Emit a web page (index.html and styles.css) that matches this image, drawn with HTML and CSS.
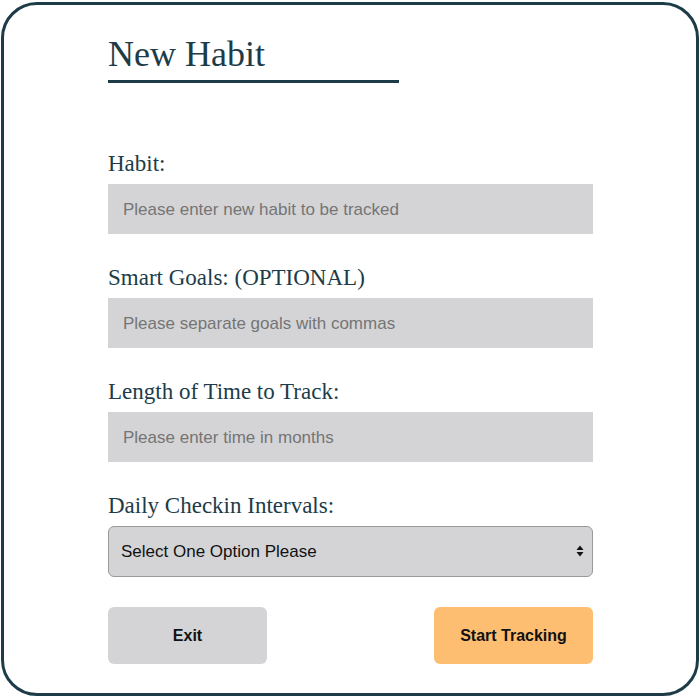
FILE: index.html
```html
<!DOCTYPE html>
<html lang="en">
<head>
<meta charset="utf-8">
<title>New Habit</title>
<link rel="stylesheet" href="styles.css">
</head>
<body>
<div class="card">
  <form class="form">
    <h1 class="title">New Habit</h1>
    <div class="fields">
      <div class="field">
        <label class="label" for="habit">Habit:</label>
        <input class="input" id="habit" type="text" placeholder="Please enter new habit to be tracked">
      </div>
      <div class="field">
        <label class="label" for="goals">Smart Goals: (OPTIONAL)</label>
        <input class="input" id="goals" type="text" placeholder="Please separate goals with commas">
      </div>
      <div class="field">
        <label class="label" for="length">Length of Time to Track:</label>
        <input class="input" id="length" type="text" placeholder="Please enter time in months">
      </div>
      <div class="field">
        <label class="label" for="interval">Daily Checkin Intervals:</label>
        <div class="select-wrap">
          <select class="select" id="interval">
            <option>Select One Option Please</option>
          </select>
          <svg class="select-arrows" width="8" height="12" viewBox="0 0 8 12" aria-hidden="true">
            <path d="M4 0.5 L7.5 5 L0.5 5 Z" fill="#111"/>
            <path d="M4 11.5 L7.5 7 L0.5 7 Z" fill="#111"/>
          </svg>
        </div>
      </div>
      <div class="actions">
        <button class="btn btn-exit" type="button">Exit</button>
        <button class="btn btn-start" type="button">Start Tracking</button>
      </div>
    </div>
  </form>
</div>
</body>
</html>
```

FILE: styles.css
```css
* { box-sizing: border-box; }

html, body {
  margin: 0;
  padding: 0;
  background: #ffffff;
}

body {
  padding: 2px 1px 0 1px;
  font-family: "Liberation Sans", Arial, sans-serif;
}

.card {
  width: 698px;
  height: 694px;
  border: 3px solid #1d3c48;
  border-radius: 36px;
  background: #ffffff;
  padding: 29px 0 0 104px;
}

.form {
  width: 485px;
}

.title {
  margin: 0;
  width: 291px;
  font-family: "Liberation Serif", "Times New Roman", serif;
  font-weight: normal;
  font-size: 36px;
  line-height: 40px;
  color: #1d3c48;
  padding-bottom: 6px;
  border-bottom: 3px solid #1d3c48;
}

.fields {
  margin-top: 67px;
  display: flex;
  flex-direction: column;
  gap: 30px;
}

.field {
  display: flex;
  flex-direction: column;
  gap: 6px;
}

.label {
  font-family: "Liberation Serif", "Times New Roman", serif;
  font-size: 23px;
  line-height: 28px;
  color: #1d3c48;
}

.input {
  display: block;
  width: 485px;
  height: 50px;
  border: none;
  background: #d4d4d6;
  padding: 2px 15px 0 15px;
  font-family: "Liberation Sans", Arial, sans-serif;
  font-size: 17px;
  color: #222;
  outline: none;
}

.input::placeholder {
  color: #757575;
}

.select-wrap {
  position: relative;
  width: 485px;
  height: 51px;
}

.select {
  appearance: none;
  -webkit-appearance: none;
  width: 100%;
  height: 100%;
  border: 1px solid #9a9a9c;
  border-radius: 6px;
  background: #d4d4d6;
  padding: 0 12px;
  font-family: "Liberation Sans", Arial, sans-serif;
  font-size: 17px;
  color: #111;
}

.select-arrows {
  position: absolute;
  right: 9px;
  top: 19px;
  pointer-events: none;
}

.actions {
  display: flex;
  justify-content: space-between;
}

.btn {
  width: 159px;
  height: 57px;
  border: none;
  border-radius: 6px;
  font-family: "Liberation Sans", Arial, sans-serif;
  font-weight: bold;
  font-size: 16px;
  color: #111;
}

.btn-exit {
  background: #d4d4d6;
}

.btn-start {
  background: #fdbe72;
}
```
